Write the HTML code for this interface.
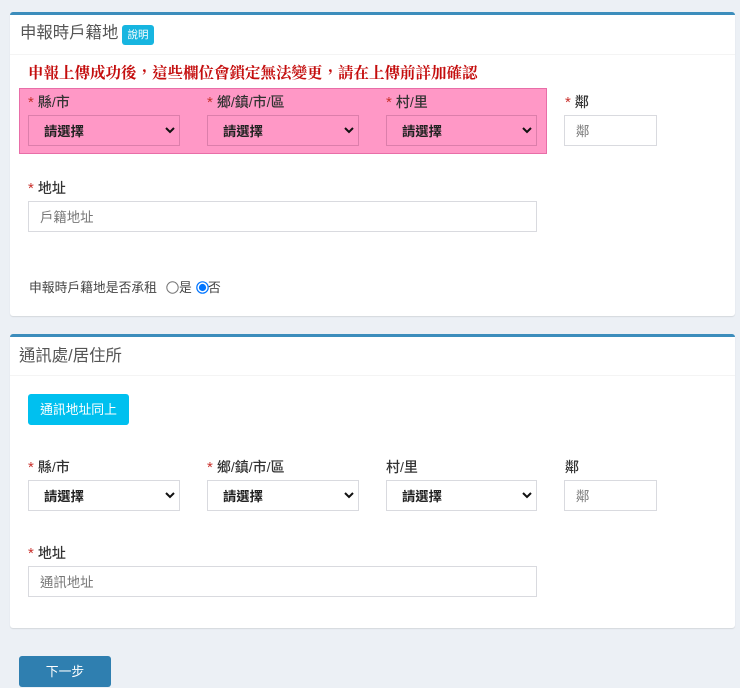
<!DOCTYPE html>
<html lang="zh-Hant"><head><meta charset="utf-8"><style>
html,body{margin:0;padding:0}
body{width:740px;height:688px;background:#ecf0f5;position:relative;overflow:hidden;font-family:"Liberation Sans","Noto Sans CJK TC",sans-serif;color:#333;font-size:13px}
.a{position:absolute;white-space:nowrap}
.card{position:absolute;left:10px;width:725px;background:#fff;border-top:3px solid #3c8dbc;border-radius:3px;box-shadow:0 1px 1px rgba(0,0,0,.1);box-sizing:border-box}
.line{position:absolute;left:10px;width:725px;height:1px;background:#f4f4f4}
.h{font-size:16.4px;color:#555;line-height:24px;font-weight:400}
.lb{font-weight:500;font-size:14px;line-height:18px;color:#333}
.lb i{color:#c9302c;font-style:normal;margin-right:4px;font-size:15px}
.sel{position:absolute;height:31px;border:1px solid #d9dadf;box-sizing:border-box;font-size:13.3px;font-weight:700;line-height:32px;padding-left:15px;color:#222}
.sel svg{position:absolute;right:4px;top:10px}
.pk{background:transparent;border-color:#dc7eab}
.inp{position:absolute;height:31px;border:1px solid #d9dadf;box-sizing:border-box;font-size:13.4px;line-height:32px;padding-left:11px;color:#777;background:#fff}
</style></head><body>
<div class="card" style="top:12px;height:304px"></div>
<div class="line" style="top:54px"></div>
<div class="a h" style="left:20px;top:21px">申報時戶籍地</div>
<div class="a" style="left:122px;top:25px;width:32px;height:20px;background:#17b5e0;border-radius:3px;color:#fff;font-size:10.5px;line-height:21px;text-align:center">說明</div>
<div class="a" style="left:28px;top:63px;font-family:'Liberation Serif','Noto Serif CJK SC',serif;font-weight:700;font-size:15.5px;line-height:22px;color:#c40d0d">申報上傳成功後，這些欄位會鎖定無法變更，請在上傳前詳加確認</div>
<div class="a" style="left:19px;top:88px;width:528px;height:66px;background:#ff98c6;border:1px solid #e86ea8;box-sizing:border-box"></div>
<div class="a lb" style="left:28px;top:93px"><i>*</i>縣/市</div>
<div class="a lb" style="left:207px;top:93px"><i>*</i>鄉/鎮/市/區</div>
<div class="a lb" style="left:386px;top:93px"><i>*</i>村/里</div>
<div class="a lb" style="left:565px;top:93px"><i>*</i>鄰</div>
<div class="sel pk" style="left:28px;top:115px;width:152px">請選擇<svg width="10" height="8" viewBox="0 0 10 8"><path d="M1 2l4 4 4-4" fill="none" stroke="#111" stroke-width="2"/></svg></div>
<div class="sel pk" style="left:207px;top:115px;width:152px">請選擇<svg width="10" height="8" viewBox="0 0 10 8"><path d="M1 2l4 4 4-4" fill="none" stroke="#111" stroke-width="2"/></svg></div>
<div class="sel pk" style="left:386px;top:115px;width:151px">請選擇<svg width="10" height="8" viewBox="0 0 10 8"><path d="M1 2l4 4 4-4" fill="none" stroke="#111" stroke-width="2"/></svg></div>
<div class="inp" style="left:564px;top:115px;width:93px">鄰</div>
<div class="a lb" style="left:28px;top:179px"><i>*</i>地址</div>
<div class="inp" style="left:28px;top:201px;width:509px">戶籍地址</div>
<div class="a" style="left:29px;top:279px;line-height:18px;font-size:12.8px;color:#444">申報時戶籍地是否承租</div>
<svg class="a" style="left:166px;top:281px" width="13" height="13" viewBox="0 0 13 13"><circle cx="6.5" cy="6.5" r="5.7" fill="#fff" stroke="#767676"/></svg>
<div class="a" style="left:179px;top:279px;line-height:18px;font-size:12.8px;color:#444">是</div>
<svg class="a" style="left:196px;top:281px" width="13" height="13" viewBox="0 0 13 13"><circle cx="6.5" cy="6.5" r="5.7" fill="#fff" stroke="#0075ff" stroke-width="1.2"/><circle cx="6.5" cy="6.5" r="3.6" fill="#0075ff"/></svg>
<div class="a" style="left:208px;top:279px;line-height:18px;font-size:12.8px;color:#444">否</div>

<div class="card" style="top:334px;height:294px"></div>
<div class="line" style="top:375px"></div>
<div class="a h" style="left:19px;top:344px">通訊處/居住所</div>
<div class="a" style="left:28px;top:394px;width:101px;height:31px;background:#00c0ef;border-radius:3px;color:#fff;font-size:12.8px;line-height:32px;text-align:center">通訊地址同上</div>
<div class="a lb" style="left:28px;top:458px"><i>*</i>縣/市</div>
<div class="a lb" style="left:207px;top:458px"><i>*</i>鄉/鎮/市/區</div>
<div class="a lb" style="left:386px;top:458px">村/里</div>
<div class="a lb" style="left:565px;top:458px">鄰</div>
<div class="sel" style="left:28px;top:480px;width:152px;background:#fff">請選擇<svg width="10" height="8" viewBox="0 0 10 8"><path d="M1 2l4 4 4-4" fill="none" stroke="#111" stroke-width="2"/></svg></div>
<div class="sel" style="left:207px;top:480px;width:152px;background:#fff">請選擇<svg width="10" height="8" viewBox="0 0 10 8"><path d="M1 2l4 4 4-4" fill="none" stroke="#111" stroke-width="2"/></svg></div>
<div class="sel" style="left:386px;top:480px;width:151px;background:#fff">請選擇<svg width="10" height="8" viewBox="0 0 10 8"><path d="M1 2l4 4 4-4" fill="none" stroke="#111" stroke-width="2"/></svg></div>
<div class="inp" style="left:564px;top:480px;width:93px">鄰</div>
<div class="a lb" style="left:28px;top:544px"><i>*</i>地址</div>
<div class="inp" style="left:28px;top:566px;width:509px">通訊地址</div>
<div class="a" style="left:19px;top:656px;width:92px;height:31px;background:#2f7fb0;border-radius:3px;color:#fff;font-size:12.8px;line-height:32px;text-align:center">下一步</div>
</body></html>
